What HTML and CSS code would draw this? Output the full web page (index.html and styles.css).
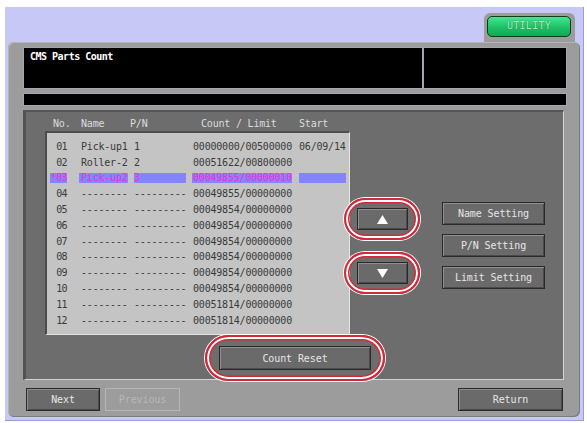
FILE: index.html
```html
<!DOCTYPE html>
<html>
<head>
<meta charset="utf-8">
<link rel="stylesheet" href="styles.css">
</head>
<body>
<div class="frame">
  <div class="tabrow">
    <div class="tab"><div class="utility">UTILITY</div></div>
  </div>
  <div class="panel">
    <div class="hdr">
      <div class="title">CMS Parts Count</div>
      <div class="hdr-side"></div>
    </div>
    <div class="bar2"></div>
    <div class="dark">
      <div class="main">
        <div class="listcol">
          <div class="labels">
            <span class="l-no">No.</span><span class="l-name">Name</span><span class="l-pn">P/N</span><span class="l-count">Count / Limit</span><span class="l-start">Start</span>
          </div>
          <div class="list">
            <div class="row"><div class="c-no"><span>01</span></div><div class="c-name"><span>Pick-up1</span></div><div class="c-pn"><span>1</span></div><div class="c-count"><span>00000000/00500000</span></div><div class="c-start"><span>06/09/14</span></div></div>
            <div class="row"><div class="c-no"><span>02</span></div><div class="c-name"><span>Roller-2</span></div><div class="c-pn"><span>2</span></div><div class="c-count"><span>00051622/00800000</span></div><div class="c-start"><span></span></div></div>
            <div class="row sel"><div class="c-no"><span>*03</span></div><div class="c-name"><span>Pick-up2</span></div><div class="c-pn"><span>3</span></div><div class="c-count"><span>00049855/00000010</span></div><div class="c-start"><span></span></div></div>
            <div class="row"><div class="c-no"><span>04</span></div><div class="c-name"><span>--------</span></div><div class="c-pn"><span>---------</span></div><div class="c-count"><span>00049855/00000000</span></div><div class="c-start"><span></span></div></div>
            <div class="row"><div class="c-no"><span>05</span></div><div class="c-name"><span>--------</span></div><div class="c-pn"><span>---------</span></div><div class="c-count"><span>00049854/00000000</span></div><div class="c-start"><span></span></div></div>
            <div class="row"><div class="c-no"><span>06</span></div><div class="c-name"><span>--------</span></div><div class="c-pn"><span>---------</span></div><div class="c-count"><span>00049854/00000000</span></div><div class="c-start"><span></span></div></div>
            <div class="row"><div class="c-no"><span>07</span></div><div class="c-name"><span>--------</span></div><div class="c-pn"><span>---------</span></div><div class="c-count"><span>00049854/00000000</span></div><div class="c-start"><span></span></div></div>
            <div class="row"><div class="c-no"><span>08</span></div><div class="c-name"><span>--------</span></div><div class="c-pn"><span>---------</span></div><div class="c-count"><span>00049854/00000000</span></div><div class="c-start"><span></span></div></div>
            <div class="row"><div class="c-no"><span>09</span></div><div class="c-name"><span>--------</span></div><div class="c-pn"><span>---------</span></div><div class="c-count"><span>00049854/00000000</span></div><div class="c-start"><span></span></div></div>
            <div class="row"><div class="c-no"><span>10</span></div><div class="c-name"><span>--------</span></div><div class="c-pn"><span>---------</span></div><div class="c-count"><span>00049854/00000000</span></div><div class="c-start"><span></span></div></div>
            <div class="row"><div class="c-no"><span>11</span></div><div class="c-name"><span>--------</span></div><div class="c-pn"><span>---------</span></div><div class="c-count"><span>00051814/00000000</span></div><div class="c-start"><span></span></div></div>
            <div class="row"><div class="c-no"><span>12</span></div><div class="c-name"><span>--------</span></div><div class="c-pn"><span>---------</span></div><div class="c-count"><span>00051814/00000000</span></div><div class="c-start"><span></span></div></div>
          </div>
        </div>
        <div class="arrows">
          <div class="oval oval-arrow"><div class="btn btn-arrow"><svg width="11" height="9" viewBox="0 0 11 9"><polygon points="5.5,0 11,9 0,9" fill="#ffffff"/></svg></div></div>
          <div class="oval oval-arrow oval-down"><div class="btn btn-arrow"><svg width="11" height="9" viewBox="0 0 11 9"><polygon points="0,0 11,0 5.5,9" fill="#ffffff"/></svg></div></div>
        </div>
        <div class="settings">
          <div class="btn btn-set">Name Setting</div>
          <div class="btn btn-set">P/N Setting</div>
          <div class="btn btn-set">Limit Setting</div>
        </div>
      </div>
      <div class="resetrow">
        <div class="oval oval-reset"><div class="btn btn-reset">Count Reset</div></div>
      </div>
    </div>
    <div class="navrow">
      <div class="btn btn-nav">Next</div>
      <div class="btn btn-nav btn-disabled">Previous</div>
      <div class="btn btn-nav btn-return">Return</div>
    </div>
  </div>
</div>
</body>
</html>
```
FILE: styles.css
```css
* { box-sizing: border-box; }
html, body { margin: 0; padding: 0; background: #ffffff; }
body {
  width: 587px;
  height: 423px;
  overflow: hidden;
  font-family: "DejaVu Sans Mono", "Liberation Mono", monospace;
}
.frame {
  margin: 7px 0 0 5px;
  width: 579px;
  height: 414px;
  background: #c8c8f7;
  padding-top: 6px;
  border-right: 1px solid #9a9ae2;
  border-bottom: 1px solid #9a9ae2;
  display: flex;
  flex-direction: column;
}
.tabrow {
  height: 29px;
  display: flex;
  justify-content: flex-end;
  padding-right: 8px;
}
.tab {
  width: 91px;
  height: 29px;
  background: #9c9c9c;
  border-radius: 6px 6px 0 0;
  padding: 3px 4px 0 3px;
}
.utility {
  height: 21px;
  border: 1.5px solid #0d3b1d;
  border-radius: 5px;
  background: linear-gradient(#48e594, #1cc066 55%, #12a855);
  color: #b4ecc0;
  font-size: 10px;
  letter-spacing: 0.3px;
  text-align: center;
  line-height: 18px;
  text-shadow: 0 0 1px #0e6a32;
}
.panel {
  margin-left: 3px;
  width: 572px;
  height: 375px;
  background: #9c9c9c;
  border-radius: 6px;
  padding: 5px 13px 0 15px;
  box-shadow: inset 1px 1px 0 #b4b4b4, inset -1px -1px 0 #7c7c7c;
}
.hdr {
  height: 42px;
  display: grid;
  grid-template-columns: 400px 1fr;
  background: #000;
  border: 1px solid #a4a4b4;
}
.title {
  color: #ffffff;
  font-weight: bold;
  font-size: 10px;
  letter-spacing: -0.5px;
  padding: 2px 0 0 6px;
  line-height: 14px;
  border-right: 2px solid #a4a4b4;
}
.bar2 {
  margin-top: 4px;
  height: 13px;
  background: #000;
  border: 1px solid #a4a4b4;
}
.dark {
  margin-top: 4px;
  width: 541px;
  height: 270px;
  background: #6d6d6d;
  border-top: 2px solid #555555;
  border-left: 3px solid #525252;
  border-right: 1px solid #d4d4d4;
  border-bottom: 1px solid #d4d4d4;
  padding: 5px 0 0 19px;
}
.main { display: flex; }
.listcol { width: 305px; flex: none; }
.labels {
  height: 14px;
  line-height: 14px;
  color: #dcdcdc;
  font-size: 10px;
  letter-spacing: -0.2px;
  display: flex;
  padding-left: 8px;
  white-space: pre;
}
.l-no { width: 28px; }
.l-name { width: 49px; }
.l-pn { width: 71px; }
.l-count { width: 98px; }
.list {
  height: 204px;
  background: #c4c4c4;
  border-top: 2px solid #4c4c4c;
  border-left: 2px solid #4c4c4c;
  border-right: 1px solid #e4e4e4;
  border-bottom: 1px solid #e4e4e4;
  padding-top: 6px;
}
.row {
  height: 15.8px;
  display: flex;
  align-items: center;
  font-size: 10px;
  letter-spacing: -0.2px;
  color: #3a3a3a;
  white-space: pre;
}
.row span {
  display: block;
  height: 10px;
  line-height: 10px;
}
.c-no { margin-left: 3px; width: 29px; }
.c-no span { width: 17px; text-align: right; letter-spacing: -0.6px; }
.c-name { width: 55px; }
.c-name span { width: 49px; padding-left: 2px; }
.c-pn { width: 58px; }
.c-pn span { width: 52px; }
.c-count { width: 107px; }
.c-count span { width: 100px; padding-left: 1px; }
.c-start span { width: 47px; }
.row.sel span { background: #8484ff; color: #e834d8; }

.oval {
  border: 2px solid #d22a3a;
  box-shadow: 0 0 0 1px #ffffff, inset 0 0 0 2px #ffffff, inset 0 0 0 3.5px #d22a3a;
  display: flex;
  align-items: center;
  justify-content: center;
}
.arrows {
  margin-left: -6px;
  padding-top: 81px;
  display: flex;
  flex-direction: column;
  gap: 12px;
  flex: none;
}
.oval-arrow {
  width: 76px;
  height: 42px;
  border-radius: 21px;
}
.btn {
  background: #6a6a6a;
  border: 1px solid #2a2a2a;
  box-shadow: inset 1px 1px 0 #8e8e8e, inset -1px -1px 0 #4a4a4a;
  color: #e6e6e6;
  font-size: 10px;
  letter-spacing: -0.1px;
  display: flex;
  align-items: center;
  justify-content: center;
  white-space: pre;
}
.btn-arrow { width: 51px; height: 22px; }
.settings {
  margin-left: 22px;
  padding-top: 85px;
  display: flex;
  flex-direction: column;
  gap: 9px;
  flex: none;
}
.btn-set { width: 103px; height: 23px; }
.resetrow { display: flex; }
.oval-reset {
  margin-left: 160px;
  width: 180px;
  height: 46px;
  border-radius: 23px;
}
.btn-reset { width: 152px; height: 24px; }
.navrow {
  margin-top: 8px;
  display: flex;
  padding-left: 3px;
  padding-right: 4px;
}
.btn-nav { width: 74px; height: 23px; }
.btn-disabled {
  margin-left: 5px;
  width: 75px;
  background: #9c9c9c;
  border: 1px solid #b6b6b6;
  box-shadow: none;
  color: #b8b8b8;
}
.btn-return { margin-left: auto; width: 105px; }
```
